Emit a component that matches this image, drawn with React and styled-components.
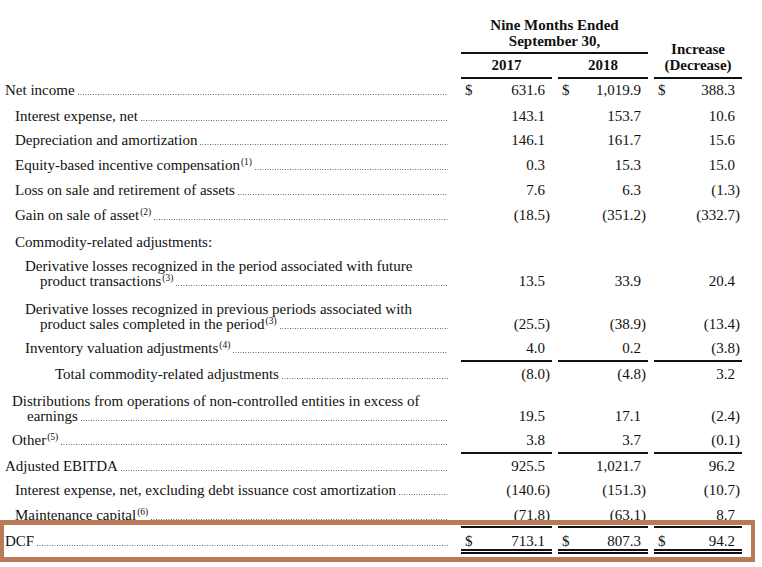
import React from 'react';
import styled, { createGlobalStyle } from 'styled-components';

const Global = createGlobalStyle`
  html, body { margin: 0; padding: 0; background: #fff; }
  body { font-family: "Liberation Serif", "Times New Roman", serif; color: #111; }
`;

const COLS = '455px 91px 90px 88px';

const Page = styled.div`
  position: relative;
  width: 762px;
  height: 567px;
  padding-top: 17px;
  box-sizing: border-box;
  overflow: hidden;
  font-size: 15px;
`;

const Header = styled.div`
  display: grid;
  grid-template-columns: ${COLS};
  column-gap: 6px;
  font-weight: bold;
  line-height: 16px;
  text-align: center;
`;

const PeriodHead = styled.div`
  grid-column: 2 / 4;
  grid-row: 1;
  padding-bottom: 3px;
  border-bottom: 2px solid #111;
`;

const YearHead = styled.div`
  grid-column: ${(p) => p.$col};
  grid-row: 2;
  padding: 3px 0 4px;
  border-bottom: 2px solid #111;
`;

const ChangeHead = styled.div`
  grid-column: 4;
  grid-row: 1 / 3;
  align-self: end;
  padding-bottom: 4px;
  border-bottom: 2px solid #111;
`;

const Row = styled.div`
  display: grid;
  grid-template-columns: ${COLS};
  column-gap: 6px;
  align-items: end;
  padding-top: ${(p) => p.$pt}px;
  line-height: 15px;
`;

const Label = styled.div`
  padding-left: ${(p) => 5 + p.$indent}px;
  padding-right: 7px;
  padding-bottom: ${(p) => p.$under}px;
  white-space: nowrap;
`;

const LabelLine = styled.div`
  display: flex;
  align-items: flex-end;
  padding-left: ${(p) => (p.$hang ? 15 : 0)}px;
`;

const Leader = styled.span`
  flex: 1;
  min-width: 0;
  height: 1px;
  margin: 0 0 3px 3px;
  background-image: linear-gradient(to right, #555 1px, transparent 1px);
  background-size: 2.5px 1px;
  background-repeat: repeat-x;
`;

const Note = styled.sup`
  font-size: 9.5px;
  line-height: 0;
  vertical-align: 5px;
  margin-left: 1px;
`;

const Amount = styled.div`
  display: flex;
  justify-content: space-between;
  align-items: flex-end;
  padding: 0 7px ${(p) => p.$pb}px 4px;
  border-bottom: ${(p) =>
    p.$rule === 'single' ? '2px solid #111' : p.$rule === 'double' ? '5px double #111' : '0'};
`;

const Close = styled.span`
  margin-right: -5px;
`;

const Highlight = styled.div`
  position: absolute;
  left: 0;
  top: 520px;
  width: 755px;
  height: 42px;
  box-sizing: border-box;
  border: 5px solid #b97a56;
  border-left-width: 4px;
  border-right-width: 4px;
  pointer-events: none;
`;

const rows = [
  { label: ['Net income'], indent: 0, pt: 4, dollar: true, vals: ['631.6', '1,019.9', '388.3'] },
  { label: ['Interest expense, net'], indent: 10, pt: 11, vals: ['143.1', '153.7', '10.6'] },
  { label: ['Depreciation and amortization'], indent: 10, pt: 9, vals: ['146.1', '161.7', '15.6'] },
  { label: ['Equity-based incentive compensation'], note: '(1)', indent: 10, pt: 10, vals: ['0.3', '15.3', '15.0'] },
  { label: ['Loss on sale and retirement of assets'], indent: 10, pt: 10, vals: ['7.6', '6.3', '(1.3)'] },
  { label: ['Gain on sale of asset'], note: '(2)', indent: 10, pt: 10, vals: ['(18.5)', '(351.2)', '(332.7)'] },
  { label: ['Commodity-related adjustments:'], indent: 10, pt: 12, heading: true, vals: ['', '', ''] },
  {
    label: ['Derivative losses recognized in the period associated with future', 'product transactions'],
    note: '(3)', indent: 20, pt: 9, vals: ['13.5', '33.9', '20.4'],
  },
  {
    label: ['Derivative losses recognized in previous periods associated with', 'product sales completed in the period'],
    note: '(3)', indent: 20, pt: 13, vals: ['(25.5)', '(38.9)', '(13.4)'],
  },
  { label: ['Inventory valuation adjustments'], note: '(4)', indent: 20, pt: 9, rule: 'single', pb: 4, vals: ['4.0', '0.2', '(3.8)'] },
  { label: ['Total commodity-related adjustments'], indent: 50, pt: 5, vals: ['(8.0)', '(4.8)', '3.2'] },
  {
    label: ['Distributions from operations of non-controlled entities in excess of', 'earnings'],
    indent: 7, pt: 12, vals: ['19.5', '17.1', '(2.4)'],
  },
  { label: ['Other'], note: '(5)', indent: 7, pt: 9, rule: 'single', pb: 4, vals: ['3.8', '3.7', '(0.1)'] },
  { label: ['Adjusted EBITDA'], indent: 0, pt: 5, vals: ['925.5', '1,021.7', '96.2'] },
  {
    label: ['Interest expense, net, excluding debt issuance cost amortization'],
    indent: 10, pt: 9, vals: ['(140.6)', '(151.3)', '(10.7)'],
  },
  { label: ['Maintenance capital'], note: '(6)', indent: 10, pt: 10, rule: 'single', pb: 3, vals: ['(71.8)', '(63.1)', '8.7'] },
  { label: ['DCF'], indent: 0, pt: 6, dollar: true, rule: 'double', pb: 0, vals: ['713.1', '807.3', '94.2'] },
];

function Num({ v }) {
  if (v.startsWith('(')) {
    return (
      <span>
        {v.slice(0, -1)}
        <Close>)</Close>
      </span>
    );
  }
  return <span>{v}</span>;
}

function LineItem({ row }) {
  const ruleWidth = row.rule === 'single' ? 2 : row.rule === 'double' ? 5 : 0;
  const pb = row.pb || 0;
  const under = pb + ruleWidth;
  const first = row.label.slice(0, -1);
  const last = row.label[row.label.length - 1];
  return (
    <Row $pt={row.pt}>
      <Label $indent={row.indent} $under={under}>
        {first.map((t) => (
          <div key={t}>{t}</div>
        ))}
        <LabelLine $hang={first.length > 0}>
          <span>
            {last}
            {row.note && <Note>{row.note}</Note>}
          </span>
          {!row.heading && <Leader />}
        </LabelLine>
      </Label>
      {row.vals.map((v, i) => (
        <Amount key={i} $rule={row.rule} $pb={pb}>
          <span>{row.dollar ? '$' : ''}</span>
          {v ? <Num v={v} /> : <span>&nbsp;</span>}
        </Amount>
      ))}
    </Row>
  );
}

export default function App() {
  return (
    <>
      <Global />
      <Page>
        <Header>
          <PeriodHead>
            Nine Months Ended
            <br />
            September 30,
          </PeriodHead>
          <YearHead $col={2}>2017</YearHead>
          <YearHead $col={3}>2018</YearHead>
          <ChangeHead>
            Increase
            <br />
            (Decrease)
          </ChangeHead>
        </Header>
        {rows.map((r, i) => (
          <LineItem key={i} row={r} />
        ))}
        <Highlight />
      </Page>
    </>
  );
}
